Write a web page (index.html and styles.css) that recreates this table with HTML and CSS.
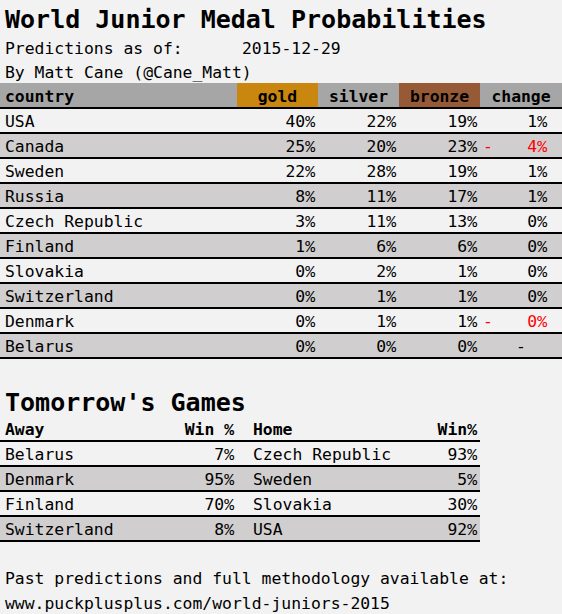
FILE: index.html
```html
<!DOCTYPE html>
<html>
<head>
<meta charset="utf-8">
<link rel="stylesheet" href="styles.css">
</head>
<body>
<div class="page">
  <h1 class="title">World Junior Medal Probabilities</h1>
  <div class="sub"><span class="label">Predictions as of:</span><span>2015-12-29</span></div>
  <div class="sub">By Matt Cane (@Cane_Matt)</div>

  <table class="medals">
    <colgroup>
      <col class="c-country"><col class="c-med"><col class="c-med"><col class="c-med"><col class="c-change">
    </colgroup>
    <thead>
      <tr>
        <th class="h-country">country</th>
        <th class="h-gold">gold</th>
        <th>silver</th>
        <th class="h-bronze">bronze</th>
        <th>change</th>
      </tr>
    </thead>
    <tbody>
      <tr><td>USA</td><td class="num">40<i>%</i></td><td class="num">22<i>%</i></td><td class="num">19<i>%</i></td><td class="chg"><span></span><span>1<i>%</i></span></td></tr>
      <tr class="alt"><td>Canada</td><td class="num">25<i>%</i></td><td class="num">20<i>%</i></td><td class="num">23<i>%</i></td><td class="chg neg"><span>-</span><span>4<i>%</i></span></td></tr>
      <tr><td>Sweden</td><td class="num">22<i>%</i></td><td class="num">28<i>%</i></td><td class="num">19<i>%</i></td><td class="chg"><span></span><span>1<i>%</i></span></td></tr>
      <tr class="alt"><td>Russia</td><td class="num">8<i>%</i></td><td class="num">11<i>%</i></td><td class="num">17<i>%</i></td><td class="chg"><span></span><span>1<i>%</i></span></td></tr>
      <tr><td>Czech Republic</td><td class="num">3<i>%</i></td><td class="num">11<i>%</i></td><td class="num">13<i>%</i></td><td class="chg"><span></span><span>0<i>%</i></span></td></tr>
      <tr class="alt"><td>Finland</td><td class="num">1<i>%</i></td><td class="num">6<i>%</i></td><td class="num">6<i>%</i></td><td class="chg"><span></span><span>0<i>%</i></span></td></tr>
      <tr><td>Slovakia</td><td class="num">0<i>%</i></td><td class="num">2<i>%</i></td><td class="num">1<i>%</i></td><td class="chg"><span></span><span>0<i>%</i></span></td></tr>
      <tr class="alt"><td>Switzerland</td><td class="num">0<i>%</i></td><td class="num">1<i>%</i></td><td class="num">1<i>%</i></td><td class="chg"><span></span><span>0<i>%</i></span></td></tr>
      <tr><td>Denmark</td><td class="num">0<i>%</i></td><td class="num">1<i>%</i></td><td class="num">1<i>%</i></td><td class="chg neg"><span>-</span><span>0<i>%</i></span></td></tr>
      <tr class="alt"><td>Belarus</td><td class="num">0<i>%</i></td><td class="num">0<i>%</i></td><td class="num">0<i>%</i></td><td class="zero">-</td></tr>
    </tbody>
  </table>

  <h2 class="title games-title">Tomorrow's Games</h2>
  <table class="games">
    <colgroup>
      <col class="g-away"><col class="g-win"><col class="g-home"><col class="g-win2">
    </colgroup>
    <thead>
      <tr><th>Away</th><th class="num">Win <i>%</i></th><th class="home">Home</th><th class="num">Win<i>%</i></th></tr>
    </thead>
    <tbody>
      <tr><td>Belarus</td><td class="num">7<i>%</i></td><td class="home">Czech Republic</td><td class="num">93<i>%</i></td></tr>
      <tr class="alt"><td>Denmark</td><td class="num">95<i>%</i></td><td class="home">Sweden</td><td class="num">5<i>%</i></td></tr>
      <tr><td>Finland</td><td class="num">70<i>%</i></td><td class="home">Slovakia</td><td class="num">30<i>%</i></td></tr>
      <tr class="alt"><td>Switzerland</td><td class="num">8<i>%</i></td><td class="home">USA</td><td class="num">92<i>%</i></td></tr>
    </tbody>
  </table>

  <div class="footer">
    <div class="line">Past predictions and full methodology available at:</div>
    <div class="line">www.puckplusplus.com/world-juniors-2015</div>
  </div>
</div>
</body>
</html>
```

FILE: styles.css
```css
html, body {
  margin: 0;
  padding: 0;
  overflow: hidden;
}
body {
  background: #f2f2f2;
  color: #000;
  font-family: "DejaVu Sans Mono", "Liberation Mono", monospace;
  font-size: 16.4px;
}
.page {
  width: 562px;
}
.title {
  margin: 0;
  padding: 5px 0 0 5px;
  font-size: 25px;
  font-weight: bold;
  line-height: 30px;
  height: 30px;
}
.sub {
  padding-left: 5px;
  line-height: 28px;
  height: 24px;
  white-space: pre;
}
.label {
  display: inline-block;
  width: 237px;
}

/* percent sign: full cap-height glyph like the reference font */
i {
  font-style: normal;
  font-family: "Liberation Mono", "DejaVu Sans Mono", monospace;
  line-height: 0;
}

table {
  border-collapse: collapse;
  table-layout: fixed;
  border-spacing: 0;
}
.medals {
  width: 562px;
}
.c-country { width: 237px; }
.c-med { width: 81px; }
.c-change { width: 82px; }

th, td {
  padding: 0;
  white-space: nowrap;
  overflow: hidden;
}
.medals thead tr {
  background: #a6a6a6;
  border-bottom: 2px solid #000;
}
.medals th {
  height: 21px;
  line-height: 21px;
  padding-top: 3px;
  font-weight: bold;
  text-align: center;
}
.medals th.h-country {
  text-align: left;
  padding-left: 5px;
}
.medals .h-gold { background: #c9870f; }
.medals .h-bronze { background: #965a37; }

.medals tbody tr,
.games tr {
  border-bottom: 2px solid #000;
}
.medals td,
.games td {
  height: 21px;
  line-height: 21px;
  padding-top: 2px;
  padding-left: 5px;
}
tr.alt { background: #d0cece; }

td.num, th.num {
  text-align: right;
  padding-left: 0;
  padding-right: 3px;
}
.medals td.chg {
  padding-left: 3px;
  padding-right: 15px;
}
.chg span:first-child { float: left; }
.chg span:last-child { float: right; }
.neg { color: #ff0000; }
.medals td.zero {
  text-align: center;
  padding-left: 0;
}

.games-title {
  margin-top: 24px;
}
.games {
  width: 480px;
}
.g-away { width: 160px; }
.g-win { width: 77px; }
.g-home { width: 163px; }
.g-win2 { width: 80px; }
.games th {
  height: 21px;
  line-height: 21px;
  padding-top: 1px;
  font-weight: bold;
  text-align: left;
  padding-left: 5px;
}
.games .home {
  padding-left: 16px;
}
.games .num {
  padding-left: 0;
  padding-right: 3px;
  text-align: right;
}

.footer {
  margin-top: 24px;
  padding-left: 5px;
}
.footer .line {
  line-height: 25px;
  height: 25px;
  white-space: nowrap;
}
```
